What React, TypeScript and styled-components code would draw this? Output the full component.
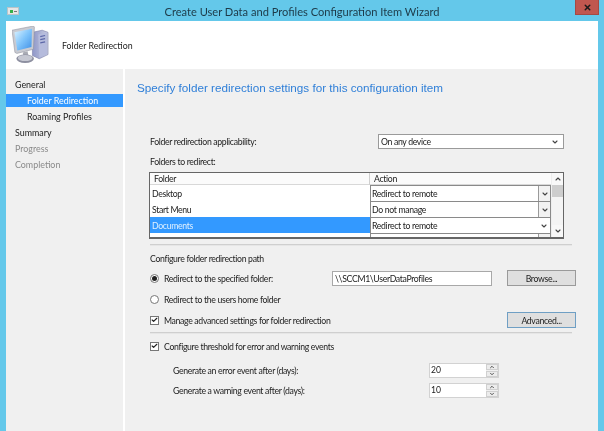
import React from "react";
import styled, { createGlobalStyle } from "styled-components";
import { ChevronDown, ChevronUp, Check, X } from "lucide-react";

const Global = createGlobalStyle`
  html, body { margin: 0; padding: 0; background: #64c8ea; }
  body { font-family: Lato, "Open Sans", Arial, sans-serif; font-size: 8.7px; letter-spacing: -0.33px; color: #222; }
  * { box-sizing: border-box; }
`;

const Win = styled.div`
  width: 604px; height: 431px; background: #64c8ea; display: flex; flex-direction: column; overflow: hidden; filter: blur(0.3px);
`;
const TitleBar = styled.div`
  height: 21px; flex: none; display: flex; align-items: center; justify-content: center;
  position: relative; font-size: 11.1px; letter-spacing: 0; color: #1d3a48; padding-top: 1px;
`;
const AppIcon = styled.div`
  position: absolute; left: 7px; top: 7px; width: 12px; height: 8px; background: #e6e6e6; border: 1px solid #b9c4c9;
  display: flex; align-items: center; justify-content: center; gap: 1px;
`;
const Plus = styled.span`width: 3px; height: 3px; background: #35b04a; display: block;`;
const Minus = styled.span`width: 3px; height: 1px; background: #777; display: block;`;
const Close = styled.div`
  position: absolute; left: 575px; top: 0; width: 24px; height: 15px; background: #c0574f; border: 1px solid #a44a44; border-top: 0;
  display: flex; align-items: center; justify-content: center;
`;
const Frame = styled.div`
  flex: 1; margin: 0 6px; display: flex; flex-direction: column; background: #fff; min-height: 0;
`;
const Header = styled.div`
  height: 48px; flex: none; display: flex; align-items: center; padding-left: 6px; background: #fff;
`;
const HeaderTitle = styled.div`margin-left: 13px; font-size: 8.8px; letter-spacing: 0; color: #222; padding-top: 1px;`;
const Main = styled.div`flex: 1; display: flex; min-height: 0;`;
const Side = styled.div`
  width: 117px; flex: none; background: #f0f0f0; padding-top: 9px; display: flex; flex-direction: column; gap: 3px;
  margin-right: 2px; font-size: 8.9px; letter-spacing: 0;
`;
const SideItem = styled.div<{ $sub?: boolean; $sel?: boolean; $dim?: boolean }>`
  height: 13px; line-height: 14px; padding-left: ${p => (p.$sub ? 21 : 9)}px;
  background: ${p => (p.$sel ? "#3399ff" : "transparent")};
  color: ${p => (p.$sel ? "#fff" : p.$dim ? "#8a8a8a" : "#222")};
`;
const Content = styled.div`flex: 1; background: #f0f0f0; padding: 11px 0 0 12px; display: flex; flex-direction: column;`;
const Heading = styled.div`height: 16px; line-height: 16px; font-family: "Liberation Sans", Arial, sans-serif; font-size: 11.7px; letter-spacing: 0; color: #2f7fd8;`;
const Form = styled.div`margin-left: 13px; width: 426px; display: flex; flex-direction: column;`;
const Row = styled.div<{ $h?: number; $mt: number; $pl?: number }>`
  display: flex; align-items: center; height: ${p => p.$h ?? 16}px; margin-top: ${p => p.$mt}px; padding-left: ${p => p.$pl ?? 0}px;
`;
const Label = styled.div<{ $w?: number }>`
  flex: none; ${p => (p.$w ? `width: ${p.$w}px;` : "")} white-space: nowrap;
`;
const Select = styled.div`
  width: 186px; height: 15px; background: #fff; border: 1px solid #9a9a9a; display: flex; align-items: center;
  justify-content: space-between; padding: 0 4px 0 2px;
`;
const Table = styled.div`
  margin-top: 4px; margin-left: -1px; width: 415px; height: 67px; border: 1px solid #666; border-width: 1px 1px 2px 1px;
  background: #fff; display: flex; overflow: hidden;
`;
const Grid = styled.div`flex: 1; display: flex; flex-direction: column; min-width: 0; overflow: hidden;`;
const HeadRow = styled.div`
  height: 12px; flex: none; display: grid; grid-template-columns: 220px 1fr; background: #fbfbfb; border-bottom: 1px solid #d8d8d8; line-height: 12px;
`;
const HeadCell = styled.div<{ $first?: boolean }>`
  padding-left: 4px; ${p => (p.$first ? "border-right: 1px solid #cfcfcf;" : "")}
`;
const DataRow = styled.div`height: 16px; flex: none; display: grid; grid-template-columns: 220px 1fr;`;
const NameCell = styled.div<{ $sel?: boolean }>`
  padding-left: 2px; line-height: 17px; background: ${p => (p.$sel ? "#3399ff" : "#fff")}; color: ${p => (p.$sel ? "#dff0ff" : "#222")};
`;
const Combo = styled.div`
  border: 1px solid #8a8a8a; background: #fff; display: flex; align-items: center; line-height: 14px;
`;
const ComboText = styled.div`flex: 1; padding-left: 1px;`;
const ComboBtn = styled.div<{ $plain?: boolean }>`
  width: 12px; height: 100%; flex: none; display: flex; align-items: center; justify-content: center;
  background: ${p => (p.$plain ? "#fff" : "#f2f2f2")}; ${p => (p.$plain ? "" : "border-left: 1px solid #9a9a9a;")}
`;
const Scroll = styled.div`
  width: 12px; flex: none; background: #f4f4f4; display: flex; flex-direction: column; border-left: 1px solid #eee;
`;
const ScrollBtn = styled.div`height: 12px; flex: none; display: flex; align-items: center; justify-content: center; background: #f8f8f8;`;
const Thumb = styled.div`height: 12px; flex: none; background: #cdcdcd;`;
const ScrollGap = styled.div`flex: 1;`;
const Separator = styled.div<{ $mt: number }>`
  margin-top: ${p => p.$mt}px; width: 422px; height: 2px; background: #cfcfcf; border-bottom: 1px solid #e6e6e6;
`;
const Radio = styled.div<{ $on?: boolean }>`
  width: 9px; height: 9px; border-radius: 50%; border: 1px solid #777; background: #fff; flex: none; margin-right: 5px; position: relative;
  &::after { content: ""; position: absolute; inset: 1px; border-radius: 50%; background: ${p => (p.$on ? "#222" : "transparent")}; }
`;
const Box = styled.div`
  width: 9px; height: 9px; border: 1px solid #777; background: #fff; flex: none; margin-right: 5px; display: flex; align-items: center; justify-content: center;
`;
const TextBox = styled.div`
  width: 160px; height: 15px; background: #fff; border: 1px solid #a8a8a8; padding-left: 2px; line-height: 13px; flex: none;
`;
const Button = styled.div<{ $focus?: boolean; $ml?: number }>`
  width: 69px; height: 16px; flex: none; display: flex; align-items: center; justify-content: center; margin-left: ${p => p.$ml ?? 0}px;
  background: #dfdfdf; border: 1px solid ${p => (p.$focus ? "#6f9fc4" : "#9a9a9a")};
`;
const Spinner = styled.div`
  width: 70px; height: 15px; flex: none; display: flex; border: 1px solid #d2d2d2; background: #fff; align-items: stretch;
`;
const SpinVal = styled.div`flex: 1; padding-left: 1px; line-height: 12px; font-size: 8.6px; letter-spacing: 0;`;
const SpinBtns = styled.div`
  width: 12px; flex: none; display: flex; flex-direction: column; gap: 1px; background: #f0f0f0; margin-left: 1px;
`;
const SpinBtn = styled.div`
  flex: 1; min-height: 0; overflow: hidden; display: flex; align-items: center; justify-content: center; background: #ececec; border: 1px solid #d0d0d0;
`;

const Down = () => <ChevronDown size={8} strokeWidth={3.2} color="#444" />;
const Up = () => <ChevronUp size={8} strokeWidth={3.2} color="#444" />;
const SpinUp = () => <ChevronUp size={6} strokeWidth={3.6} color="#444" />;
const SpinDown = () => <ChevronDown size={6} strokeWidth={3.6} color="#444" />;
const Tick = () => <Check size={8} strokeWidth={4} color="#222" />;

const PcIcon = () => (
  <svg width="37" height="38" viewBox="0 0 38 36" preserveAspectRatio="none" style={{ flex: "none" }} aria-hidden>
    <defs>
      <linearGradient id="scr" x1="0" y1="0" x2="1" y2="1">
        <stop offset="0" stopColor="#dff4ff" />
        <stop offset="0.5" stopColor="#7fc4fb" />
        <stop offset="1" stopColor="#3f8fe6" />
      </linearGradient>
      <linearGradient id="tow" x1="0" y1="0" x2="1" y2="0">
        <stop offset="0" stopColor="#8f97c9" />
        <stop offset="1" stopColor="#c9cde0" />
      </linearGradient>
    </defs>
    <path d="M21 6 L31 4 L37 6 L37 27 L28 31 L21 28 Z" fill="url(#tow)" stroke="#7c80a8" strokeWidth="0.6" />
    <path d="M27 8 L36 6 L36 27 L28 30 Z" fill="#b5bbdc" />
    <path d="M29 10 L34 9 M29 13 L34 12 M29 16 L34 15" stroke="#5d68a8" strokeWidth="1.2" />
    <path d="M0 4 L22 0 L23 1 L22 22 L5 26 L3 25 Z" fill="#c9cbd2" stroke="#8a8c98" strokeWidth="0.5" />
    <path d="M2.5 6 L20.5 2.6 L20 20 L5.5 23.2 Z" fill="url(#scr)" />
    <path d="M11 25 L16 24 L17 29 L12 30 Z" fill="#a9abb4" />
    <ellipse cx="13.5" cy="31" rx="9" ry="4" fill="#8d8fa0" />
    <ellipse cx="13.5" cy="30.3" rx="7.5" ry="2.9" fill="#c6c8d2" />
  </svg>
);

const folders = [
  { name: "Desktop", action: "Redirect to remote" },
  { name: "Start Menu", action: "Do not manage" },
  { name: "Documents", action: "Redirect to remote", sel: true },
  { name: "Music", action: "Do not manage" },
];

export default function App() {
  return (
    <Win>
      <Global />
      <TitleBar>
        <AppIcon><Plus /><Minus /></AppIcon>
        Create User Data and Profiles Configuration Item Wizard
        <Close><X size={9} strokeWidth={4} color="#1a1a1a" /></Close>
      </TitleBar>
      <Frame>
        <Header>
          <PcIcon />
          <HeaderTitle>Folder Redirection</HeaderTitle>
        </Header>
        <Main>
          <Side>
            <SideItem>General</SideItem>
            <SideItem $sub $sel>Folder Redirection</SideItem>
            <SideItem $sub>Roaming Profiles</SideItem>
            <SideItem>Summary</SideItem>
            <SideItem $dim>Progress</SideItem>
            <SideItem $dim>Completion</SideItem>
          </Side>
          <Content>
            <Heading>Specify folder redirection settings for this configuration item</Heading>
            <Form>
              <Row $h={15} $mt={38}>
                <Label $w={228}>Folder redirection applicability:</Label>
                <Select>On any device<Down /></Select>
              </Row>
              <Row $h={14} $mt={5}><Label>Folders to redirect:</Label></Row>
              <Table>
                <Grid>
                  <HeadRow>
                    <HeadCell $first>Folder</HeadCell>
                    <HeadCell>Action</HeadCell>
                  </HeadRow>
                  {folders.map(f => (
                    <DataRow key={f.name}>
                      <NameCell $sel={f.sel}>{f.name}</NameCell>
                      <Combo>
                        <ComboText>{f.action}</ComboText>
                        <ComboBtn $plain={f.sel}><Down /></ComboBtn>
                      </Combo>
                    </DataRow>
                  ))}
                </Grid>
                <Scroll>
                  <ScrollBtn><Up /></ScrollBtn>
                  <Thumb />
                  <ScrollGap />
                  <ScrollBtn><Down /></ScrollBtn>
                </Scroll>
              </Table>
              <Separator $mt={5} />
              <Row $h={14} $mt={5}><Label>Configure folder redirection path</Label></Row>
              <Row $mt={5}>
                <Radio $on />
                <Label $w={168}>Redirect to the specified folder:</Label>
                <TextBox>\\SCCM1\UserDataProfiles</TextBox>
                <Button $ml={15}>Browse...</Button>
              </Row>
              <Row $mt={5}><Radio /><Label>Redirect to the users home folder</Label></Row>
              <Row $mt={5}>
                <Box><Tick /></Box>
                <Label $w={343}>Manage advanced settings for folder redirection</Label>
                <Button $focus>Advanced...</Button>
              </Row>
              <Separator $mt={4} />
              <Row $mt={4}><Box><Tick /></Box><Label>Configure threshold for error and warning events</Label></Row>
              <Row $mt={8} $pl={23}>
                <Label $w={256}>Generate an error event after (days):</Label>
                <Spinner><SpinVal>20</SpinVal><SpinBtns><SpinBtn><SpinUp /></SpinBtn><SpinBtn><SpinDown /></SpinBtn></SpinBtns></Spinner>
              </Row>
              <Row $mt={4} $pl={23}>
                <Label $w={256}>Generate a warning event after (days):</Label>
                <Spinner><SpinVal>10</SpinVal><SpinBtns><SpinBtn><SpinUp /></SpinBtn><SpinBtn><SpinDown /></SpinBtn></SpinBtns></Spinner>
              </Row>
            </Form>
          </Content>
        </Main>
      </Frame>
    </Win>
  );
}
